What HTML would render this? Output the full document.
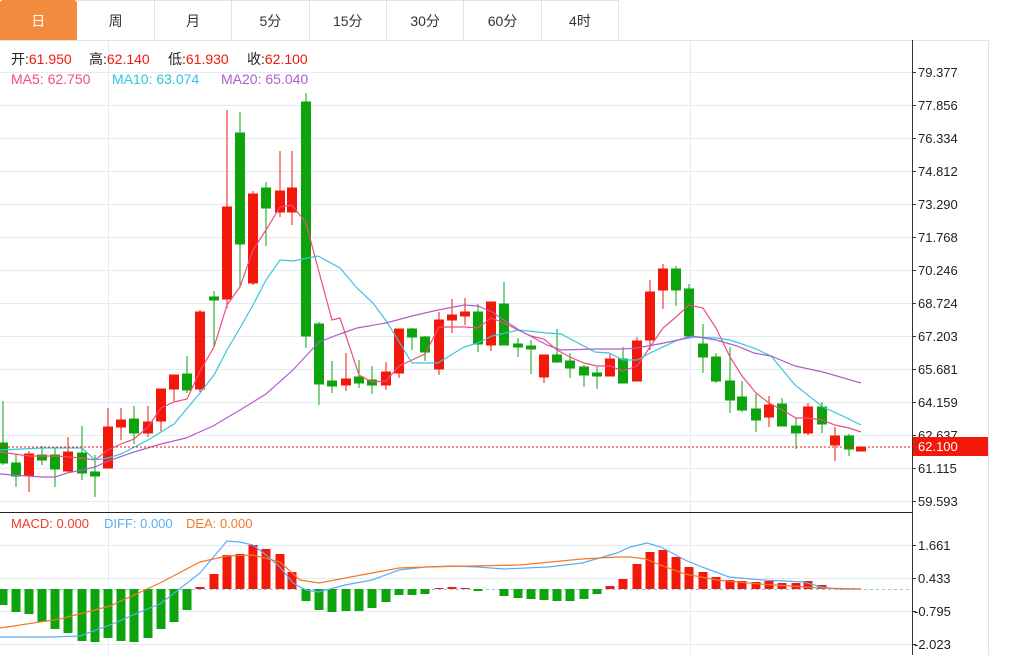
<!DOCTYPE html>
<html><head><meta charset="utf-8"><style>
html,body{margin:0;padding:0;background:#fff;width:1013px;height:655px;overflow:hidden;font-family:"Liberation Sans","Noto Sans CJK SC",sans-serif}
.tabs{position:absolute;left:0;top:0;height:40px;width:620px;display:flex;border-bottom:1px solid #e3e3e3}
.tab{width:77.4px;height:40px;box-sizing:border-box;border-right:1px solid #e3e3e3;border-top:1px solid #e3e3e3;display:flex;align-items:center;justify-content:center;font-size:14px;color:#333}
.tab.on{background:#f28b3e;color:#fff;border-radius:3px 3px 0 0;border-color:#f28b3e}
svg{position:absolute;left:0;top:0}
</style></head><body>
<svg width="1013" height="655" viewBox="0 0 1013 655" font-family="Liberation Sans, Noto Sans CJK SC, sans-serif">
<line x1="0" y1="40.5" x2="988" y2="40.5" stroke="#e3e3e3"/>
<line x1="988.5" y1="40" x2="988.5" y2="655" stroke="#e3e3e3"/>
<g stroke="#e4ecf2" stroke-width="1">
<line x1="0" x2="912" y1="72.5" y2="72.5"/><line x1="0" x2="912" y1="105.5" y2="105.5"/><line x1="0" x2="912" y1="138.5" y2="138.5"/><line x1="0" x2="912" y1="171.5" y2="171.5"/><line x1="0" x2="912" y1="204.5" y2="204.5"/><line x1="0" x2="912" y1="237.5" y2="237.5"/><line x1="0" x2="912" y1="270.5" y2="270.5"/><line x1="0" x2="912" y1="303.5" y2="303.5"/><line x1="0" x2="912" y1="336.5" y2="336.5"/><line x1="0" x2="912" y1="369.5" y2="369.5"/><line x1="0" x2="912" y1="402.5" y2="402.5"/><line x1="0" x2="912" y1="435.5" y2="435.5"/><line x1="0" x2="912" y1="468.5" y2="468.5"/><line x1="0" x2="912" y1="501.5" y2="501.5"/>
<line x1="0" x2="912" y1="545.5" y2="545.5"/><line x1="0" x2="912" y1="578.5" y2="578.5"/><line x1="0" x2="912" y1="611.5" y2="611.5"/><line x1="0" x2="912" y1="644.5" y2="644.5"/>
<line x1="108.5" x2="108.5" y1="40" y2="655"/><line x1="690.5" x2="690.5" y1="40" y2="655"/>
</g>
<g font-size="14">
<text x="11" y="64" fill="#222">开:<tspan fill="#f0190a">61.950</tspan></text>
<text x="89" y="64" fill="#222">高:<tspan fill="#f0190a">62.140</tspan></text>
<text x="168" y="64" fill="#222">低:<tspan fill="#f0190a">61.930</tspan></text>
<text x="247" y="64" fill="#222">收:<tspan fill="#f0190a">62.100</tspan></text>
<text x="11" y="84" fill="#ee4d7c">MA5: 62.750</text>
<text x="112" y="84" fill="#2fc4dc">MA10: 63.074</text>
<text x="221" y="84" fill="#b35ccc">MA20: 65.040</text>
</g>

<g stroke="#0da30d" fill="#0da30d" stroke-width="1">
<path d="M3 401V465M16 454V487M42 446V465M55 447V487M82 426V480M95 455V497M134 406V444M187 356V393M214 291V346M240 112V287M266 182V246M306 93V348M319 322V405M332 361V393M359 360V388M372 366V394M412 328V350M425 336V361M478 304V352M504 282V345M518 338V357M531 340V374M557 329V363M570 353V378M584 365V387M597 367V389M623 347V383M676 266V306M689 284V336M703 324V373M716 353V383M730 347V413M742 381V412M756 394V432M782 398V426M796 418V449M822 402V433M849 434V456"/>
<rect x="-1.5" y="443" width="9" height="20"/><rect x="11.5" y="463" width="9" height="13"/><rect x="37.5" y="455" width="9" height="5"/><rect x="50.5" y="455" width="9" height="14"/><rect x="77.5" y="453" width="9" height="20"/><rect x="90.5" y="472" width="9" height="4"/><rect x="129.5" y="419" width="9" height="14"/><rect x="182.5" y="374" width="9" height="16"/><rect x="209.5" y="297" width="9" height="3"/><rect x="235.5" y="133" width="9" height="111"/><rect x="261.5" y="188" width="9" height="20"/><rect x="301.5" y="102" width="9" height="234"/><rect x="314.5" y="324" width="9" height="60"/><rect x="327.5" y="381" width="9" height="5"/><rect x="354.5" y="377" width="9" height="6"/><rect x="367.5" y="380" width="9" height="5"/><rect x="407.5" y="329" width="9" height="8"/><rect x="420.5" y="337" width="9" height="15"/><rect x="473.5" y="312" width="9" height="32"/><rect x="499.5" y="304" width="9" height="41"/><rect x="513.5" y="344" width="9" height="3"/><rect x="526.5" y="346" width="9" height="3"/><rect x="552.5" y="355" width="9" height="7"/><rect x="565.5" y="361" width="9" height="7"/><rect x="579.5" y="367" width="9" height="8"/><rect x="592.5" y="373" width="9" height="3"/><rect x="618.5" y="359" width="9" height="24"/><rect x="671.5" y="269" width="9" height="21"/><rect x="684.5" y="289" width="9" height="47"/><rect x="698.5" y="344" width="9" height="13"/><rect x="711.5" y="357" width="9" height="24"/><rect x="725.5" y="381" width="9" height="19"/><rect x="737.5" y="397" width="9" height="13"/><rect x="751.5" y="409" width="9" height="11"/><rect x="777.5" y="404" width="9" height="22"/><rect x="791.5" y="426" width="9" height="7"/><rect x="817.5" y="407" width="9" height="17"/><rect x="844.5" y="436" width="9" height="13"/>
</g>
<g stroke="#f2180a" fill="#f2180a" stroke-width="1">
<path d="M29 451V492M68 437V472M108 408V468M121 408V440M148 406V437M161 389V431M174 375V401M200 310V392M227 110V308M253 191V285M280 151V217M292 151V225M346 353V391M386 362V390M399 329V378M439 312V375M452 299V333M465 298V325M491 302V351M544 355V383M610 354V376M637 337V381M650 280V350M663 264V309M769 396V427M808 403V435M835 427V461"/>
<rect x="24.5" y="454" width="9" height="22"/><rect x="63.5" y="452" width="9" height="19"/><rect x="103.5" y="427" width="9" height="41"/><rect x="116.5" y="420" width="9" height="7"/><rect x="143.5" y="422" width="9" height="11"/><rect x="156.5" y="389" width="9" height="32"/><rect x="169.5" y="375" width="9" height="14"/><rect x="195.5" y="312" width="9" height="77"/><rect x="222.5" y="207" width="9" height="92"/><rect x="248.5" y="194" width="9" height="89"/><rect x="275.5" y="191" width="9" height="21"/><rect x="287.5" y="188" width="9" height="24"/><rect x="341.5" y="379" width="9" height="6"/><rect x="381.5" y="372" width="9" height="13"/><rect x="394.5" y="329" width="9" height="44"/><rect x="434.5" y="320" width="9" height="49"/><rect x="447.5" y="315" width="9" height="5"/><rect x="460.5" y="312" width="9" height="4"/><rect x="486.5" y="302" width="9" height="43"/><rect x="539.5" y="355" width="9" height="22"/><rect x="605.5" y="359" width="9" height="17"/><rect x="632.5" y="341" width="9" height="40"/><rect x="645.5" y="292" width="9" height="48"/><rect x="658.5" y="269" width="9" height="21"/><rect x="764.5" y="405" width="9" height="12"/><rect x="803.5" y="407" width="9" height="26"/><rect x="830.5" y="436" width="9" height="9"/><rect x="856.5" y="447" width="9" height="4"/>
</g>
<g fill="none" stroke-width="1.2">
<polyline stroke="#ee4d7c" points="0,452 29,456 55,456 82,458 95,460 108,450 121,444 134,439 148,427 161,408 174,402 187,399 200,371 214,347 227,305 240,287 253,250 266,230 280,207 292,205 306,223 319,272 332,320 340,318 359,375 372,382 386,381 399,366 412,360 425,354 439,327 452,327 465,327 478,328 491,318 504,323 518,330 531,336 544,339 557,350 570,357 584,363 597,366 610,366 623,371 637,366 650,347 663,328 676,317 689,305 703,308 716,328 730,357 742,376 756,393 769,403 782,410 796,418 808,418 822,420 835,425 849,428 861,432"/>
<polyline stroke="#38c6dc" points="0,450 42,448 82,448 95,460 108,458 121,454 148,440 174,424 200,393 214,375 227,350 240,328 253,305 266,280 280,260 293,261 318,256 340,268 357,288 373,303 387,322 412,363 424,363 438,363 464,347 478,343 492,336 519,330 547,333 561,334 595,352 609,353 623,360 637,360 650,353 678,340 695,337 716,338 730,340 754,348 771,356 795,385 823,407 847,418 861,425"/>
<polyline stroke="#b35ccc" points="0,474 42,477 55,477 67,473 82,470 95,467 108,461 134,452 161,444 186,438 213,426 240,410 266,394 293,370 319,342 340,334 357,328 386,323 412,316 438,310 464,305 478,306 492,312 519,330 547,345 561,350 595,349 623,349 637,348 664,343 678,340 692,336 716,340 737,346 754,353 771,356 795,366 823,372 861,383"/>
</g>
<line x1="0" y1="447" x2="912" y2="447" stroke="#f2180a" stroke-dasharray="2,2"/>
<line x1="0" y1="512.5" x2="912" y2="512.5" stroke="#222"/>
<line x1="912.5" y1="40" x2="912.5" y2="655" stroke="#333"/>
<g stroke="#333"><path d="M912 72.5h4M912 105.5h4M912 138.5h4M912 171.5h4M912 204.5h4M912 237.5h4M912 270.5h4M912 303.5h4M912 336.5h4M912 369.5h4M912 402.5h4M912 435.5h4M912 468.5h4M912 501.5h4M912 545.5h4M912 578.5h4M912 611.5h4M912 644.5h4"/></g>
<g font-size="13" fill="#222">
<text x="918" y="77">79.377</text><text x="918" y="110">77.856</text><text x="918" y="143">76.334</text><text x="918" y="176">74.812</text><text x="918" y="209">73.290</text><text x="918" y="242">71.768</text><text x="918" y="275">70.246</text><text x="918" y="308">68.724</text><text x="918" y="341">67.203</text><text x="918" y="374">65.681</text><text x="918" y="407">64.159</text><text x="918" y="440">62.637</text><text x="918" y="473">61.115</text><text x="918" y="506">59.593</text>
<text x="918" y="550">1.661</text><text x="918" y="583">0.433</text><text x="914" y="616">-0.795</text><text x="914" y="649">-2.023</text>
</g>
<rect x="913" y="437" width="75" height="19" fill="#f2180a"/>
<text x="918" y="451" font-size="13" fill="#fff">62.100</text>

<text x="11" y="528" font-size="13" fill="#f0392a">MACD: 0.000</text>
<text x="104" y="528" font-size="13" fill="#5aaef0">DIFF: 0.000</text>
<text x="186" y="528" font-size="13" fill="#f07a28">DEA: 0.000</text>
<line x1="0" y1="589.5" x2="912" y2="589.5" stroke="#8cc8ec" stroke-dasharray="3,3"/>
<g fill="#0da30d">
<rect x="-1.5" y="589" width="9" height="16"/><rect x="11.5" y="589" width="9" height="23"/><rect x="24.5" y="589" width="9" height="25"/><rect x="37.5" y="589" width="9" height="33"/><rect x="50.5" y="589" width="9" height="40"/><rect x="63.5" y="589" width="9" height="44"/><rect x="77.5" y="589" width="9" height="52"/><rect x="90.5" y="589" width="9" height="53"/><rect x="103.5" y="589" width="9" height="49"/><rect x="116.5" y="589" width="9" height="52"/><rect x="129.5" y="589" width="9" height="53"/><rect x="143.5" y="589" width="9" height="49"/><rect x="156.5" y="589" width="9" height="40"/><rect x="169.5" y="589" width="9" height="33"/><rect x="182.5" y="589" width="9" height="21"/>
<rect x="301.5" y="589" width="9" height="12"/><rect x="314.5" y="589" width="9" height="21"/><rect x="327.5" y="589" width="9" height="23"/><rect x="341.5" y="589" width="9" height="22"/><rect x="354.5" y="589" width="9" height="22"/><rect x="367.5" y="589" width="9" height="19"/><rect x="381.5" y="589" width="9" height="13"/><rect x="394.5" y="589" width="9" height="6"/><rect x="407.5" y="589" width="9" height="6"/><rect x="420.5" y="589" width="9" height="5"/><rect x="473.5" y="589" width="9" height="2"/>
<rect x="499.5" y="589" width="9" height="7"/><rect x="513.5" y="589" width="9" height="9"/><rect x="526.5" y="589" width="9" height="10"/><rect x="539.5" y="589" width="9" height="11"/><rect x="552.5" y="589" width="9" height="12"/><rect x="565.5" y="589" width="9" height="12"/><rect x="579.5" y="589" width="9" height="10"/><rect x="592.5" y="589" width="9" height="5"/>
</g>
<g fill="#f2180a">
<rect x="195.5" y="587" width="9" height="2"/><rect x="209.5" y="574" width="9" height="15"/><rect x="222.5" y="555" width="9" height="34"/><rect x="235.5" y="554" width="9" height="35"/><rect x="248.5" y="545" width="9" height="44"/><rect x="261.5" y="549" width="9" height="40"/><rect x="275.5" y="554" width="9" height="35"/><rect x="287.5" y="572" width="9" height="17"/>
<rect x="434.5" y="588" width="9" height="1"/><rect x="447.5" y="587" width="9" height="2"/><rect x="460.5" y="588" width="9" height="1"/>
<rect x="605.5" y="586" width="9" height="3"/><rect x="618.5" y="579" width="9" height="10"/><rect x="632.5" y="564" width="9" height="25"/><rect x="645.5" y="552" width="9" height="37"/><rect x="658.5" y="550" width="9" height="39"/><rect x="671.5" y="557" width="9" height="32"/><rect x="684.5" y="567" width="9" height="22"/><rect x="698.5" y="572" width="9" height="17"/><rect x="711.5" y="577" width="9" height="12"/><rect x="725.5" y="580" width="9" height="9"/><rect x="737.5" y="581" width="9" height="8"/><rect x="751.5" y="582" width="9" height="7"/><rect x="764.5" y="581" width="9" height="8"/><rect x="777.5" y="583" width="9" height="6"/><rect x="791.5" y="583" width="9" height="6"/><rect x="803.5" y="581" width="9" height="8"/><rect x="817.5" y="585" width="9" height="4"/>
</g>
<g fill="none" stroke-width="1.2">
<polyline stroke="#5aaef0" points="0,637 50,637 80,636 110,625 140,612 160,604 200,573 227,541 240,542 253,545 266,555 280,567 293,583 306,590 319,592 345,585 372,580 399,570 425,567 452,566 478,567 504,569 548,567 582,563 617,553 630,547 647,543 661,547 685,560 702,567 729,577 763,580 804,582 821,587 838,589 861,589"/>
<polyline stroke="#f07a28" points="0,628 60,619 110,606 160,583 200,562 227,556 253,555 280,562 300,580 319,583 372,573 399,568 425,567 470,566 520,565 582,559 617,557 630,557 646,559 660,565 685,574 717,580 760,584 820,588 861,589"/>
</g>
</svg>
<div class="tabs">
<div class="tab on">日</div><div class="tab">周</div><div class="tab">月</div><div class="tab">5分</div><div class="tab">15分</div><div class="tab">30分</div><div class="tab">60分</div><div class="tab">4时</div>
</div>
</body></html>
